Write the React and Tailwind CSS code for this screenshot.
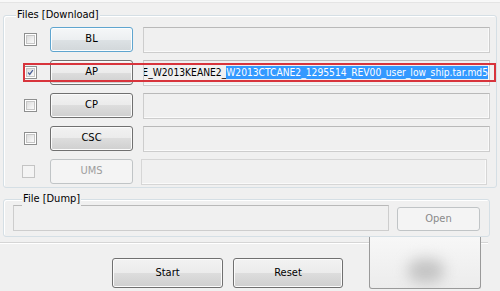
const btn =
  "h-[25px] w-[83px] shrink-0 flex items-center justify-center rounded-[3px] border border-[#707070] bg-[linear-gradient(to_bottom,#f2f2f2_0%,#ebebeb_50%,#dddddd_50%,#cfcfcf_100%)] shadow-[inset_0_0_0_1px_#fbfbfb] text-black";

function Checkbox({ checked }) {
  return (
    <div className="w-[13px] h-[13px] shrink-0 border border-[#8e8f8f] bg-white p-[1px]">
      <div className="w-full h-full border border-[#c6c6c6] bg-[linear-gradient(135deg,#dcdcdc,#fbfbfb)] relative">
        {checked && (
          <svg viewBox="0 0 9 9" className="absolute inset-0 w-full h-full">
            <path d="M1.5 4.5 L3.5 7 L7.5 1.5" fill="none" stroke="#4a5f97" strokeWidth="1.6" />
          </svg>
        )}
      </div>
    </div>
  );
}

function Field({ children }) {
  return (
    <div className="flex-1 min-w-0 h-[26px] flex items-center justify-end overflow-hidden whitespace-nowrap border border-[#cdcdcd] border-t-[#b9b9b9] bg-[#f0f0f0] shadow-[inset_-1px_-1px_0_#fafafa]">
      {children}
    </div>
  );
}

function Row({ label, checked, children }) {
  return (
    <div className="flex items-center h-[25px]">
      <Checkbox checked={checked} />
      <div className={btn + " ml-[13px]"}>{label}</div>
      <div className="ml-[10px] flex-1 min-w-0 flex">
        <Field>{children}</Field>
      </div>
    </div>
  );
}

export default function App() {
  return (
    <div
      className="w-[500px] h-[291px] bg-[#f0f0f0] relative overflow-hidden text-[11px] text-black"
      style={{ fontFamily: '"DejaVu Sans Condensed", "Liberation Sans", sans-serif' }}
    >
      <div className="h-[3px] bg-[#f8f8f8] border-b border-[#e4e4e4]" />
      <div className="pl-[3px] pr-[3px] pt-[12px]">
        {/* Files group */}
        <div className="relative h-[173px] border border-[#d5dfe5] rounded-[3px] shadow-[inset_1px_1px_0_#ffffff] pt-[11px] pl-[20px] pr-[6px] flex flex-col gap-[8px]">
          <span className="absolute left-[12px] top-[-8px] px-[1px] bg-[#f0f0f0] leading-[14px]">Files [Download]</span>

          <div className="flex items-center h-[25px]">
            <Checkbox />
            <div className="ml-[13px] h-[25px] w-[83px] shrink-0 flex items-center justify-center rounded-[3px] border border-[#5fa5cf] bg-[linear-gradient(to_bottom,#f5f7f8_0%,#eceff1_50%,#dde2e5_50%,#d2d7da_100%)] shadow-[inset_0_0_0_1px_#fbfdfe]">
              BL
            </div>
            <div className="ml-[10px] flex-1 min-w-0 flex">
              <Field />
            </div>
          </div>

          <Row label="AP" checked>
            <span className="pr-[1px] text-[10.2px]">
              CODE_W2013KEANE2_
              <span className="bg-[#3399ff] text-white py-[1px]">W2013CTCANE2_1295514_REV00_user_low_ship.tar.md5</span>
            </span>
          </Row>
          <Row label="CP" />
          <Row label="CSC" />

          <div className="flex items-center h-[25px]">
            <div className="ml-[-2px] w-[13px] h-[13px] shrink-0 border border-[#c4c4c4] bg-[#f4f4f4]" />
            <div className="ml-[15px] h-[25px] w-[83px] shrink-0 flex items-center justify-center rounded-[3px] border border-[#c0c4c6] bg-[#f4f4f4] text-[#9d9d9d]">
              UMS
            </div>
            <div className="ml-[8px] mr-[3px] flex-1 h-[26px] border border-[#d6d6d6] bg-[#f0f0f0] shadow-[inset_-1px_-1px_0_#fafafa]" />
          </div>

          {/* highlight */}
          <div className="absolute left-[19px] right-0 top-[47px] h-[19px] border-2 border-[#d8343c]" />
        </div>

        {/* Dump group */}
        <div className="relative mt-[11px] w-[487px] h-[38px] border border-[#d5dfe5] rounded-[3px] shadow-[inset_1px_1px_0_#ffffff] pt-[5px] pl-[9px] pr-[9px] flex items-start">
          <span className="absolute left-[18px] top-[-8px] px-[1px] bg-[#f0f0f0] leading-[14px]">File [Dump]</span>
          <div className="w-[376px] h-[26px] border border-[#cdcdcd] border-t-[#b9b9b9] bg-[#f0f0f0]" />
          <div className="ml-[8px] mt-[2px] h-[24px] w-[83px] flex items-center justify-center rounded-[3px] border border-[#c0c4c6] bg-[#f4f4f4] text-[#8a8a8a]">
            Open
          </div>
        </div>
      </div>

      <div className="mt-[5px] w-[488px] h-[2px] border-t border-[#d5d5d5] border-b border-b-white" />

      <div className="mt-[14px] flex pl-[112px]">
        <div className={btn + " !w-[111px] !h-[30px]"}>Start</div>
        <div className={btn + " ml-[10px] !w-[110px] !h-[30px]"}>Reset</div>
        <div className="ml-[26px] w-[112px] h-[30px] rounded-[3px] border border-[#8c8c8c]" />
      </div>

      {/* blurred area */}
      <div className="absolute left-[369px] top-[237px] w-[112px] h-[52px] rounded-b-[3px] border-x border-b border-[#9a9a9a] bg-[linear-gradient(to_bottom,#f7f7f7,#ececec)] overflow-hidden">
        <div className="absolute left-[38px] top-[22px] w-[36px] h-[24px] rounded-full bg-[#c4c4c4] blur-[7px]" />
      </div>
    </div>
  );
}
